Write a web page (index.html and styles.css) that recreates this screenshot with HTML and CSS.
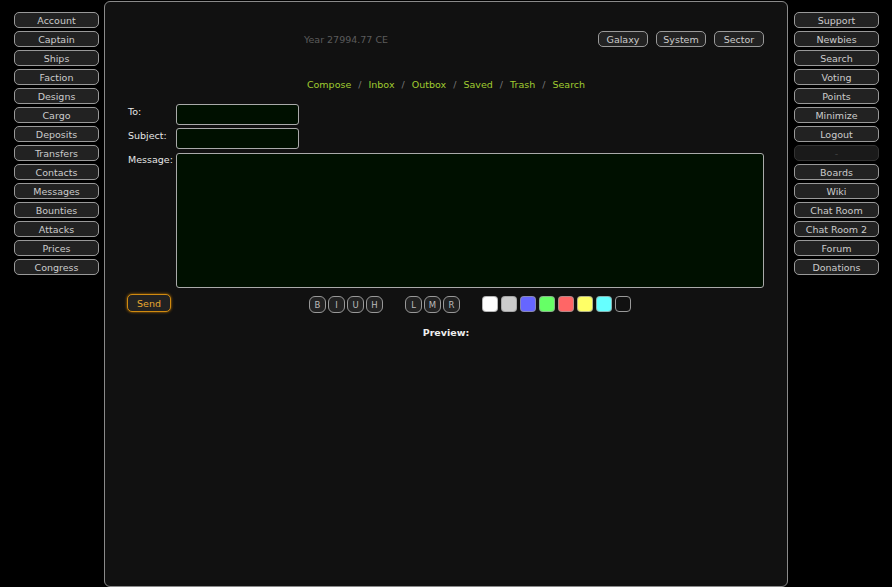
FILE: index.html
```html
<!DOCTYPE html>
<html>
<head>
<meta charset="utf-8">
<link rel="stylesheet" href="styles.css">
</head>
<body>
<div class="page">
  <nav class="side">
    <div class="btn">Account</div>
    <div class="btn">Captain</div>
    <div class="btn">Ships</div>
    <div class="btn">Faction</div>
    <div class="btn">Designs</div>
    <div class="btn">Cargo</div>
    <div class="btn">Deposits</div>
    <div class="btn">Transfers</div>
    <div class="btn">Contacts</div>
    <div class="btn">Messages</div>
    <div class="btn">Bounties</div>
    <div class="btn">Attacks</div>
    <div class="btn">Prices</div>
    <div class="btn">Congress</div>
  </nav>
  <main class="panel">
    <div class="top">
      <div class="year">Year 27994.77 CE</div>
      <div class="views">
        <div class="btn view">Galaxy</div>
        <div class="btn view">System</div>
        <div class="btn view">Sector</div>
      </div>
    </div>
    <div class="tabs">
      <a>Compose</a> <span class="sep">/</span> <a>Inbox</a> <span class="sep">/</span> <a>Outbox</a> <span class="sep">/</span> <a>Saved</a> <span class="sep">/</span> <a>Trash</a> <span class="sep">/</span> <a>Search</a>
    </div>
    <div class="compose">
      <div class="label">To:</div>
      <div><div class="field"></div></div>
      <div class="label">Subject:</div>
      <div><div class="field"></div></div>
      <div class="label msg">Message:</div>
      <div><div class="area"></div></div>
      <div class="send-cell"><div class="send">Send</div></div>
      <div class="tools">
        <div class="group">
          <div class="fmt">B</div><div class="fmt">I</div><div class="fmt">U</div><div class="fmt">H</div>
        </div>
        <div class="group">
          <div class="fmt">L</div><div class="fmt">M</div><div class="fmt">R</div>
        </div>
        <div class="group swatches">
          <div class="sw c-white"></div>
          <div class="sw c-gray"></div>
          <div class="sw c-blue"></div>
          <div class="sw c-green"></div>
          <div class="sw c-red"></div>
          <div class="sw c-yellow"></div>
          <div class="sw c-cyan"></div>
          <div class="sw c-black"></div>
        </div>
      </div>
    </div>
    <div class="preview">Preview:</div>
  </main>
  <nav class="side right">
    <div class="btn">Support</div>
    <div class="btn">Newbies</div>
    <div class="btn">Search</div>
    <div class="btn">Voting</div>
    <div class="btn">Points</div>
    <div class="btn">Minimize</div>
    <div class="btn">Logout</div>
    <div class="btn off">-</div>
    <div class="btn">Boards</div>
    <div class="btn">Wiki</div>
    <div class="btn">Chat Room</div>
    <div class="btn">Chat Room 2</div>
    <div class="btn">Forum</div>
    <div class="btn">Donations</div>
  </nav>
</div>
</body>
</html>
```
FILE: styles.css
```css
html, body {
  margin: 0;
  background: #000;
}
body {
  font-family: "DejaVu Sans", "Liberation Sans", sans-serif;
  font-size: 9.5px;
  color: #ddd;
}
.page {
  display: flex;
  align-items: flex-start;
  gap: 5px;
  padding-left: 14px;
  height: 587px;
  overflow: hidden;
}
.side {
  width: 85px;
  flex: none;
  display: flex;
  flex-direction: column;
  gap: 3px;
  padding-top: 12px;
}
.side.right {
  margin-left: 1px;
}
.btn {
  height: 16px;
  box-sizing: border-box;
  border: 1px solid #999;
  border-radius: 5px;
  background: #222;
  color: #ccc;
  display: flex;
  align-items: center;
  justify-content: center;
  padding-top: 1px;
  white-space: nowrap;
}
.btn.off {
  background: #1a1a1a;
  border-color: #333;
  color: #444;
}
.panel {
  width: 684px;
  height: 586px;
  margin-top: 1px;
  flex: none;
  box-sizing: border-box;
  border: 1px solid #8a8a8a;
  border-radius: 6px;
  background: #111;
  padding: 29px 23px 0;
}
.top {
  display: grid;
  grid-template-columns: 1fr 200px;
  align-items: center;
  height: 16px;
}
.year {
  text-align: center;
  color: #5c5c5c;
  padding-top: 1px;
}
.views {
  display: flex;
  justify-content: flex-end;
  gap: 8px;
}
.view {
  width: 50px;
}
.tabs {
  margin-top: 32px;
  text-align: center;
  line-height: 12px;
}
.tabs a {
  color: #a0cc30;
}
.tabs .sep {
  color: #777;
  margin: 0 4px;
}
.compose {
  margin-top: 13px;
  display: grid;
  grid-template-columns: 48px 588px;
  row-gap: 3px;
}
.label {
  color: #e6e6e6;
  padding-top: 2px;
  line-height: 12px;
}
.label.msg {
  margin-top: 0;
}
.field {
  width: 123px;
  height: 21px;
  box-sizing: border-box;
  border: 1px solid #aaa;
  border-radius: 3px;
  background: #001000;
}
.area {
  margin-top: 1px;
  height: 135px;
  box-sizing: border-box;
  border: 1px solid #aaa;
  border-radius: 3px;
  background: #001000;
}
.send-cell {
  margin-top: 3px;
}
.send {
  margin-left: -1px;
  width: 44px;
  height: 18px;
  box-sizing: border-box;
  border: 1px solid #d08a10;
  border-radius: 5px;
  box-shadow: 0 0 3px #c07800;
  background: #222;
  color: #e8a830;
  display: flex;
  align-items: center;
  justify-content: center;
  padding-top: 1px;
}
.tools {
  margin-top: 5px;
  display: flex;
  justify-content: center;
  align-items: flex-start;
  gap: 22px;
}
.group {
  display: flex;
  gap: 2px;
}
.fmt {
  width: 17px;
  height: 17px;
  box-sizing: border-box;
  border: 1px solid #999;
  border-radius: 6px;
  background: #222;
  color: #bbb;
  font-size: 8.5px;
  display: flex;
  align-items: center;
  justify-content: center;
  padding-top: 1px;
}
.swatches {
  gap: 3px;
}
.sw {
  width: 16px;
  height: 16px;
  box-sizing: border-box;
  border: 1px solid rgba(150, 150, 150, 0.7);
  border-radius: 4px;
}
.c-white { background: #fff; }
.c-gray { background: #ccc; }
.c-blue { background: #6666ff; }
.c-green { background: #66ff66; }
.c-red { background: #ff6666; }
.c-yellow { background: #ffff66; }
.c-cyan { background: #66ffff; }
.c-black { background: #111; border-color: #999; }
.preview {
  margin-top: 14px;
  text-align: center;
  font-weight: bold;
  color: #eee;
}
```
